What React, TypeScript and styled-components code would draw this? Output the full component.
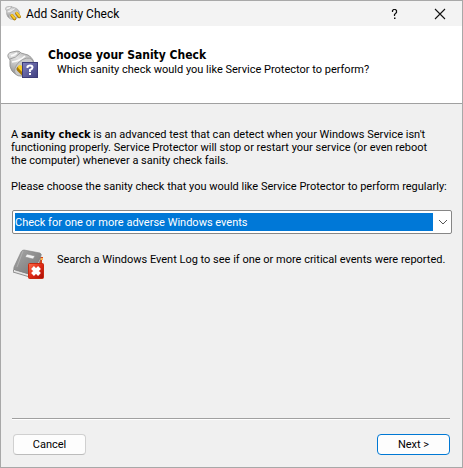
import React from "react";
import styled, { createGlobalStyle } from "styled-components";

const GlobalStyle = createGlobalStyle`
  * { box-sizing: border-box; }
  body {
    margin: 0;
    background: #f0f0f0;
    color: #000;
    font-family: Roboto, "Open Sans", sans-serif;
    font-size: 11px;
    line-height: 13px;
  }
`;

const Window = styled.main`
  display: flex;
  flex-direction: column;
  min-height: 100vh;
  border: 1px solid #a8a8a8;
  background: #f0f0f0;
`;

const TitleBar = styled.header`
  display: flex;
  align-items: center;
  height: 25px;
  padding-left: 4px;
  background: #f3f3f3;
`;

const WindowTitle = styled.span`
  flex: 1;
  margin-left: 4px;
  font-size: 12px;
  line-height: 16px;
`;

const CaptionButton = styled.button`
  display: flex;
  align-items: center;
  justify-content: center;
  width: 45px;
  height: 25px;
  padding: 0;
  border: 0;
  background: transparent;
`;

const Banner = styled.section`
  display: flex;
  gap: 8px;
  height: 78px;
  padding: 21px 6px 0;
  border-bottom: 1px solid #a0a0a0;
  background: #fff;
`;

const BannerText = styled.div`
  flex: 1;
`;

const Heading = styled.h1`
  margin: 0;
  font-family: "DejaVu Sans Condensed", "DejaVu Sans", sans-serif;
  font-size: 12px;
  line-height: 16px;
  font-weight: bold;
`;

const Subheading = styled.p`
  margin: 0 0 0 9px;
`;

const Content = styled.section`
  flex: 1;
  padding: 24px 10px 0;
`;

const Paragraph = styled.p`
  margin: 0 0 13px;
  padding-right: 10px;
`;

const Term = styled.b`
  font-family: "DejaVu Sans Condensed", "DejaVu Sans", sans-serif;
  line-height: 1;
`;

const FieldLabel = styled.label`
  display: block;
  margin-bottom: 17px;
`;

const ComboBox = styled.div`
  position: relative;
  margin-left: 1px;
  border: 1px solid #868686;
  border-radius: 2px;
  background: #fff;
`;

const Select = styled.select`
  display: block;
  width: 100%;
  height: 22px;
  padding: 2px 18px 2px 2px;
  border: 0;
  outline: 0;
  appearance: none;
  background-color: #0078d7;
  background-clip: content-box;
  color: #fff;
  font: inherit;
`;

const Chevron = styled.svg`
  position: absolute;
  top: 8px;
  right: 3px;
  pointer-events: none;
`;

const Description = styled.div`
  display: flex;
  gap: 12px;
  margin-top: 15px;
  padding-left: 2px;
`;

const DescriptionText = styled.p`
  flex: 1;
  margin: 4px 0 0;
`;

const Footer = styled.footer`
  display: flex;
  justify-content: space-between;
  margin: 0 12px 0 11px;
  padding: 15px 0 12px 1px;
  border-top: 1px solid #a0a0a0;
  box-shadow: inset 0 1px #fff;
`;

const Button = styled.button<{ $primary?: boolean }>`
  width: 73px;
  height: 21px;
  padding: 0;
  border: 1px solid ${(p) => (p.$primary ? "#0078d4" : "#d0d0d0")};
  border-bottom-color: ${(p) => (p.$primary ? "#0078d4" : "#bcbcbc")};
  border-radius: 4px;
  background: #fdfdfd;
  color: #000;
  font: inherit;
`;

function PlugBody() {
  return (
    <>
      <defs>
        <linearGradient id="metal" x1="0.7" y1="0" x2="0.2" y2="1">
          <stop offset="0" stopColor="#b0b0b0" />
          <stop offset="0.35" stopColor="#e2e2e2" />
          <stop offset="0.65" stopColor="#bdbdbd" />
          <stop offset="1" stopColor="#868686" />
        </linearGradient>
      </defs>
      <path d="M1 6Q0 2 5 1L10 0Q13 0 14 2L21 4Q28 8 27 16Q25 25 16 25Q9 25 5 20Q2 16 3 9Z" fill="url(#metal)" stroke="#8c8c8c" strokeWidth="0.8" />
      <path d="M3 8Q9 7 13 2" fill="none" stroke="#8f8f8f" strokeWidth="0.8" />
      <path d="M4 5Q7 4 10 2M5 11Q13 10 18 5" fill="none" stroke="#fafafa" strokeWidth="1.6" />
      <ellipse cx="17" cy="16" rx="11" ry="7" transform="rotate(-42 17 16)" fill="#cacaca" stroke="#979797" strokeWidth="0.8" />
    </>
  );
}

function PlugIcon() {
  return (
    <svg width="17" height="16" viewBox="0 0 32 30" aria-hidden="true">
      <PlugBody />
      <path d="M13 18L18 24M22 14L27 20" stroke="#a97500" strokeWidth="6" strokeLinecap="round" />
      <path d="M13 17L18 23M22 13L27 19" stroke="#f7c928" strokeWidth="4" strokeLinecap="round" />
    </svg>
  );
}

function PlugQuestionIcon() {
  return (
    <svg width="33" height="32" viewBox="0 0 33 32" aria-hidden="true">
      <defs>
        <linearGradient id="badge" x1="0" y1="0" x2="1" y2="1">
          <stop offset="0" stopColor="#7f7fbd" />
          <stop offset="1" stopColor="#404080" />
        </linearGradient>
      </defs>
      <g transform="translate(0 4)">
        <PlugBody />
        <path d="M12 18L17 23" stroke="#a97900" strokeWidth="5" strokeLinecap="round" />
        <path d="M13 16L18 21" stroke="#f9cd2a" strokeWidth="4" strokeLinecap="round" />
      </g>
      <rect x="15.5" y="15.5" width="15" height="15" fill="url(#badge)" stroke="#3d3d78" />
      <path d="M20.5 21V19.5Q21 18.5 23 18.5Q25.5 18.5 25.5 20.5Q25.5 22 23 23V25" fill="none" stroke="#fff" strokeWidth="2" />
      <path d="M22 26H24V28H22Z" fill="#fff" />
    </svg>
  );
}

function EventLogIcon() {
  return (
    <svg width="32" height="32" viewBox="0 0 32 32" aria-hidden="true">
      <defs>
        <linearGradient id="cover" x1="0" y1="0" x2="1" y2="1">
          <stop offset="0" stopColor="#a9a9a9" />
          <stop offset="1" stopColor="#737373" />
        </linearGradient>
        <linearGradient id="alert" x1="0" y1="0" x2="1" y2="1">
          <stop offset="0" stopColor="#ff704b" />
          <stop offset="0.5" stopColor="#df2916" />
          <stop offset="1" stopColor="#a50c06" />
        </linearGradient>
      </defs>
      <path d="M24 8H30V11H29V15H23Z" fill="#d84117" />
      <path d="M26 9H30V11H26Z" fill="#ffb253" />
      <path d="M1 20L19 26L27 8V12L20 29L0 23Z" fill="#e5e5e5" stroke="#777" strokeWidth="0.8" />
      <path d="M8 3Q9 1 11 1L27 4Q29 5 28 7L20 24Q19 26 16 25L2 21Q0 20 1 18Z" fill="url(#cover)" stroke="#808080" strokeWidth="0.6" />
      <path d="M10 2L4 18" stroke="#b5b5b5" strokeWidth="0.8" />
      <path d="M14 5L22 7L20 10L12 8Z" fill="#f2f2f2" stroke="#8a8a8a" strokeWidth="0.6" />
      <rect x="15.5" y="14.5" width="15" height="15" rx="1" fill="url(#alert)" stroke="#c8280f" />
      <path d="M19.5 18.5L26.5 25.5M26.5 18.5L19.5 25.5" stroke="#fff" strokeWidth="4" />
    </svg>
  );
}

export default function App() {
  return (
    <>
      <GlobalStyle />
      <Window>
        <TitleBar>
          <PlugIcon />
          <WindowTitle>Add Sanity Check</WindowTitle>
          <CaptionButton aria-label="Help">
            <svg width="8" height="12" viewBox="0 0 8 12">
              <path d="M1.5 4V2.5L2.5 1.5H4.5L5.5 2.5V4.5L3.5 6.5V8" fill="none" stroke="#111" strokeWidth="1.2" />
              <path d="M3 9.5H4.5V11H3Z" fill="#111" />
            </svg>
          </CaptionButton>
          <CaptionButton aria-label="Close">
            <svg width="12" height="12" viewBox="0 0 12 12">
              <path d="M1 1L11 11M11 1L1 11" stroke="#111" strokeWidth="1.1" />
            </svg>
          </CaptionButton>
        </TitleBar>
        <Banner>
          <PlugQuestionIcon />
          <BannerText>
            <Heading>Choose your Sanity Check</Heading>
            <Subheading>Which sanity check would you like Service Protector to perform?</Subheading>
          </BannerText>
        </Banner>
        <Content>
          <Paragraph>
            A <Term>sanity check</Term> is an advanced test that can detect when your Windows Service isn't
            functioning properly. Service Protector will stop or restart your service (or even reboot
            the computer) whenever a sanity check fails.
          </Paragraph>
          <FieldLabel htmlFor="check">
            Please choose the sanity check that you would like Service Protector to perform regularly:
          </FieldLabel>
          <ComboBox>
            <Select id="check">
              <option>Check for one or more adverse Windows events</option>
            </Select>
            <Chevron width="10" height="6" viewBox="0 0 10 6" aria-hidden="true">
              <path d="M1 1L5 5L9 1" fill="none" stroke="#555" />
            </Chevron>
          </ComboBox>
          <Description>
            <EventLogIcon />
            <DescriptionText>
              Search a Windows Event Log to see if one or more critical events were reported.
            </DescriptionText>
          </Description>
        </Content>
        <Footer>
          <Button type="button">Cancel</Button>
          <Button type="button" $primary>Next &gt;</Button>
        </Footer>
      </Window>
    </>
  );
}
